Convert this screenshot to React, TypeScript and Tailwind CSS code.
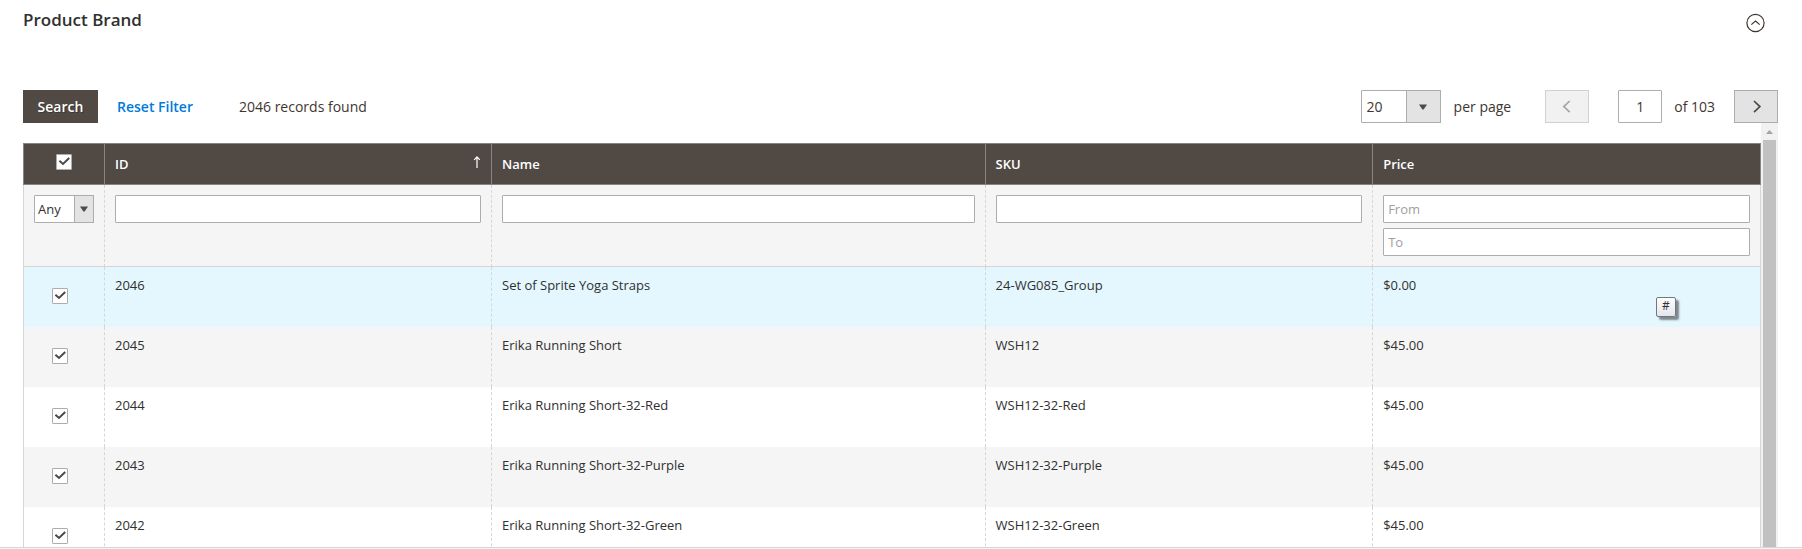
import React, { useState } from "react";

const products = [
  { id: "2046", name: "Set of Sprite Yoga Straps", sku: "24-WG085_Group", price: "$0.00" },
  { id: "2045", name: "Erika Running Short", sku: "WSH12", price: "$45.00" },
  { id: "2044", name: "Erika Running Short-32-Red", sku: "WSH12-32-Red", price: "$45.00" },
  { id: "2043", name: "Erika Running Short-32-Purple", sku: "WSH12-32-Purple", price: "$45.00" },
  { id: "2042", name: "Erika Running Short-32-Green", sku: "WSH12-32-Green", price: "$45.00" },
];

function Checkbox({ label }: { label: string }) {
  return (
    <span className="grid size-4">
      <input
        type="checkbox"
        defaultChecked
        aria-label={label}
        className="peer col-start-1 row-start-1 size-4 appearance-none rounded-[1px] border border-[#adadad] bg-white"
      />
      <svg
        viewBox="0 0 16 16"
        className="pointer-events-none col-start-1 row-start-1 hidden size-4 peer-checked:block"
        fill="none"
        stroke="#514943"
        strokeWidth="2"
      >
        <path d="M3.4 6.8 7 10 13.2 4" />
      </svg>
    </span>
  );
}

function Caret() {
  return (
    <svg viewBox="0 0 8 6" className="h-[6px] w-2" fill="#514943">
      <path d="M0 .5h8L4.6 5.5H3.4z" />
    </svg>
  );
}

function FilterInput({ label, placeholder }: { label: string; placeholder?: string }) {
  return (
    <input
      type="text"
      aria-label={label}
      placeholder={placeholder}
      className="block h-7 w-full rounded-[1px] border border-[#adadad] bg-white px-1 text-[13px] text-[#303030] placeholder:text-[#a0a0a0]"
    />
  );
}

const headCell = "border-y border-l border-[#8a837f] px-2.5 text-left font-semibold";
const filterCell = "border-b border-l border-b-[#d6d6d6] border-l-[#d6d6d6] px-2.5 py-2.5 align-top [border-left-style:dashed]";
const bodyCell = "h-15 border-l border-dashed border-[#d6d6d6] px-2.5 py-2.5 align-top leading-4";

export default function App() {
  const [perPage, setPerPage] = useState("20");

  return (
    <main className="bg-white font-['Open_Sans',sans-serif] text-sm text-[#41362f]">
      <section className="border-b border-[#d6d6d6] pr-6 pl-[23px]">
        <header className="flex items-start justify-between pt-2 pr-3">
          <h2 className="text-[17px] leading-6 font-semibold text-[#303030]">Product Brand</h2>
          <button type="button" aria-label="Collapse section" className="mt-[5px]">
            <svg viewBox="0 0 20 20" className="size-5" fill="none" stroke="#41362f" strokeWidth="1.2">
              <circle cx="9.5" cy="10" r="8.6" />
              <path d="M5.3 11.6 9.5 8l4.2 3.6" />
            </svg>
          </button>
        </header>

        <div className="mt-[57px] flex h-[33px] items-center justify-between">
          <div className="flex items-center">
            <button
              type="button"
              className="h-[33px] w-[75px] bg-[#514943] font-semibold text-white [text-shadow:1px_1px_0_rgba(0,0,0,0.25)]"
            >
              Search
            </button>
            <button type="button" className="ml-[19px] font-semibold text-[#007bdb]">
              Reset Filter
            </button>
            <span className="ml-[46px]">2046 records found</span>
          </div>
          <div className="flex items-center">
            <div className="relative">
              <select
                id="per-page"
                value={perPage}
                onChange={(e) => setPerPage(e.target.value)}
                className="block h-[33px] w-20 appearance-none rounded-[1px] border border-[#adadad] bg-white pl-[5px]"
              >
                <option>20</option>
                <option>30</option>
                <option>50</option>
              </select>
              <span className="pointer-events-none absolute inset-y-0 right-0 flex w-[35px] items-center justify-center border border-[#adadad] bg-[#e3e3e3]">
                <Caret />
              </span>
            </div>
            <label htmlFor="per-page" className="ml-[13px]">
              per page
            </label>
            <button
              type="button"
              disabled
              aria-label="Previous page"
              className="ml-[34px] flex h-[33px] w-11 items-center justify-center border border-[#d1d1d1] bg-[#f1f1f1]"
            >
              <svg viewBox="0 0 12 16" className="h-4 w-3" fill="none" stroke="#a8a4a1" strokeWidth="1.7">
                <path d="M8.7 2 2.8 7.6l5.9 5.6" />
              </svg>
            </button>
            <input
              id="page"
              type="text"
              defaultValue="1"
              className="ml-[29px] h-[33px] w-11 rounded-[1px] border border-[#adadad] bg-white text-center"
            />
            <label htmlFor="page" className="ml-3">
              of 103
            </label>
            <button
              type="button"
              aria-label="Next page"
              className="ml-[19px] flex h-[33px] w-11 items-center justify-center border border-[#adadad] bg-[#e3e3e3]"
            >
              <svg viewBox="0 0 12 16" className="h-4 w-3" fill="none" stroke="#514943" strokeWidth="1.7">
                <path d="M4 2l5.9 5.6L4 13.2" />
              </svg>
            </button>
          </div>
        </div>

        <div className="flex h-[424px]">
          <div className="min-w-0 flex-1 overflow-y-auto pt-5 [scrollbar-width:none]">
            <table className="w-full table-fixed border-separate border-spacing-0 text-[13px] text-[#303030]">
              <colgroup>
                <col className="w-[81px]" />
                <col className="w-[387px]" />
                <col className="w-[28.4%]" />
                <col className="w-[22.3%]" />
                <col />
              </colgroup>
              <thead>
                <tr className="h-[42px] bg-[#514943] text-white">
                  <th className="border-y border-l border-[#8a837f] pb-1">
                    <div className="flex justify-center">
                      <Checkbox label="Select all" />
                    </div>
                  </th>
                  <th className={headCell}>
                    <div className="flex items-center justify-between">
                      ID
                      <svg viewBox="0 0 8 14" className="mb-1 h-3.5 w-2" fill="none" stroke="#fff" strokeWidth="1.2">
                        <path d="M4 13V2M1.2 4.8 4 1.8l2.8 3" />
                      </svg>
                    </div>
                  </th>
                  <th className={headCell}>Name</th>
                  <th className={headCell}>SKU</th>
                  <th className={headCell + " border-r"}>Price</th>
                </tr>
                <tr className="bg-[#f5f5f5]">
                  <td className="border-b border-l border-[#d6d6d6] px-2.5 py-2.5 align-top">
                    <div className="relative">
                      <select
                        aria-label="Selection filter"
                        className="block h-7 w-full appearance-none rounded-[1px] border border-[#adadad] bg-white pl-[3px]"
                      >
                        <option>Any</option>
                        <option>Yes</option>
                        <option>No</option>
                      </select>
                      <span className="pointer-events-none absolute inset-y-0 right-0 flex w-5 items-center justify-center border border-[#adadad] bg-[#e3e3e3]">
                        <Caret />
                      </span>
                    </div>
                  </td>
                  <td className={filterCell}>
                    <FilterInput label="ID" />
                  </td>
                  <td className={filterCell}>
                    <FilterInput label="Name" />
                  </td>
                  <td className={filterCell}>
                    <FilterInput label="SKU" />
                  </td>
                  <td className={filterCell + " border-r border-r-[#d6d6d6]"}>
                    <div className="flex flex-col gap-[5px]">
                      <FilterInput label="Price from" placeholder="From" />
                      <FilterInput label="Price to" placeholder="To" />
                    </div>
                  </td>
                </tr>
              </thead>
              <tbody>
                {products.map((p, i) => (
                  <tr key={p.id} className={i === 0 ? "bg-[#e5f7fe]" : i % 2 ? "bg-[#f5f5f5]" : "bg-white"}>
                    <td className="h-15 border-l border-[#d6d6d6] pt-[21px] pl-7 align-top">
                      <Checkbox label={"Select " + p.name} />
                    </td>
                    <td className={bodyCell}>{p.id}</td>
                    <td className={bodyCell}>{p.name}</td>
                    <td className={bodyCell}>{p.sku}</td>
                    <td className={bodyCell + " relative border-r [border-right-style:solid]"}>
                      {p.price}
                      {i === 0 && (
                        <a
                          href="#"
                          title={p.name}
                          className="absolute top-[30px] right-[84px] flex size-5 items-center justify-center rounded-[2px] border border-[#76757a] bg-linear-to-b from-white to-[#e4e4f0] pb-0.5 text-xs shadow-[3px_3px_2px_rgba(0,0,0,0.45)]"
                        >
                          #
                        </a>
                      )}
                    </td>
                  </tr>
                ))}
              </tbody>
            </table>
          </div>
          <div aria-hidden="true" className="flex w-[17px] flex-col items-center bg-[#f1f1f1]">
            <svg viewBox="0 0 17 17" className="size-[17px]" fill="#a3a3a3">
              <path d="M5 11h7L8.5 7z" />
            </svg>
            <div className="w-[13px] flex-1 bg-[#c1c1c1]" />
          </div>
        </div>
      </section>
      <div className="h-px bg-[#f5f5f5]" />
    </main>
  );
}
